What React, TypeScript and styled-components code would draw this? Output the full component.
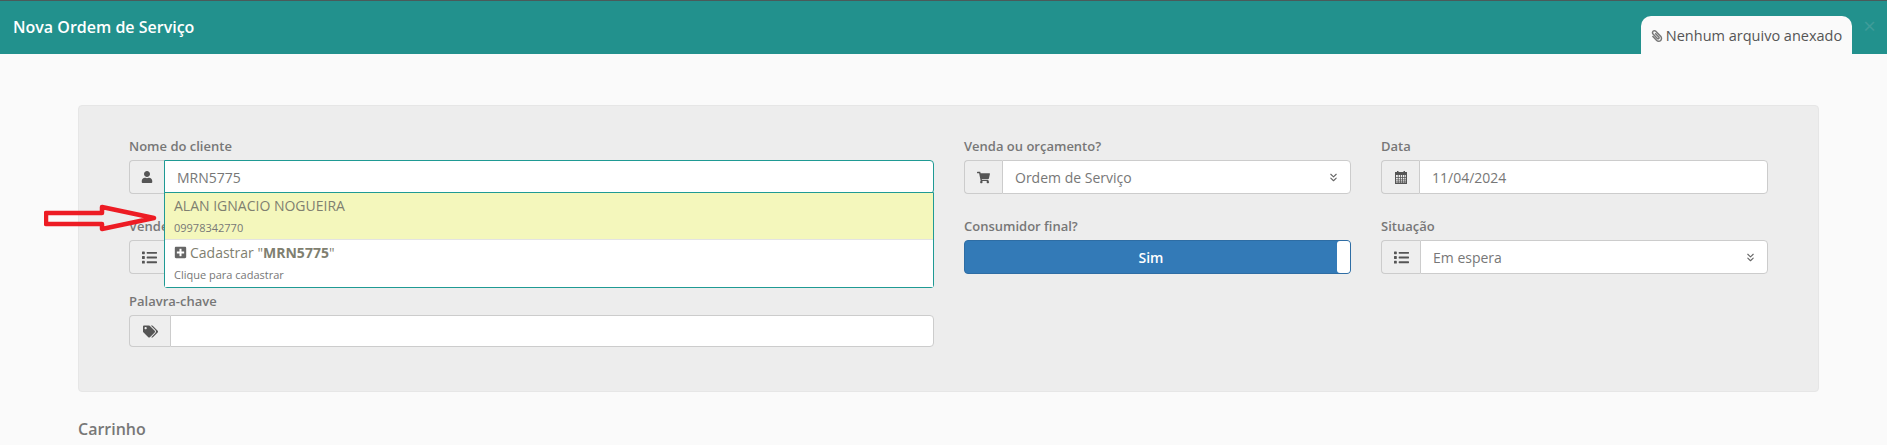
import { createGlobalStyle, styled } from 'styled-components';
import { FaList, FaPaperclip, FaPlusSquare, FaShoppingCart, FaTags, FaUser } from 'react-icons/fa';
import { ChevronsDown } from 'lucide-react';
import type { ReactNode } from 'react';

const GlobalStyle = createGlobalStyle`
  html, body {
    margin: 0;
    padding: 0;
    height: 445px;
    overflow: hidden;
    background: #fafafa;
    font-family: "Open Sans", "Noto Sans", sans-serif;
    color: #777;
  }
  * { box-sizing: border-box; }
`;

const Header = styled.header`
  height: 54px;
  border-top: 1px solid #4a5a5a;
  background: #22918d;
  display: flex;
  align-items: flex-start;
  justify-content: space-between;
  padding-left: 13px;
`;

const Title = styled.h1`
  margin: 9px 0 0;
  font-size: 16px;
  line-height: 34px;
  font-weight: 600;
  color: #fff;
`;

const HeaderRight = styled.div`
  display: flex;
  align-items: flex-start;
`;

const AttachTab = styled.div`
  width: 211px;
  height: 38px;
  margin-top: 15px;
  padding: 7px 0 5px;
  background: #fafafa;
  border-radius: 10px 10px 0 0;
  display: flex;
  justify-content: center;
  align-items: center;
  gap: 3px;
  font-size: 14.5px;
  line-height: 20px;
  color: #555;
  svg {
    font-size: 12px;
    color: #777;
    transform: scaleX(-1);
  }
`;

const CloseMark = styled.span`
  width: 35px;
  text-align: center;
  margin-top: 13px;
  font-size: 22px;
  line-height: 22px;
  color: #3f9c99;
`;

const Panel = styled.section`
  margin: 51px 68px 0 78px;
  height: 287px;
  padding: 31px 50px 0;
  background: #ededed;
  border: 1px solid #e6e6e6;
  border-radius: 4px;
  display: grid;
  grid-template-columns: 805px 387px 387px;
  column-gap: 30px;
`;

const Column = styled.div`
  display: flex;
  flex-direction: column;
`;

const Field = styled.div<{ $gap?: number }>`
  margin-bottom: ${(p) => p.$gap ?? 23}px;
`;

const Label = styled.label`
  display: block;
  font-size: 13px;
  line-height: 18px;
  margin-bottom: 5px;
  font-weight: 600;
  color: #777;
`;

const Group = styled.div<{ $height?: number }>`
  display: flex;
  height: ${(p) => p.$height ?? 34}px;
  position: relative;
`;

const Addon = styled.span<{ $width: number }>`
  flex: 0 0 ${(p) => p.$width}px;
  display: flex;
  align-items: center;
  justify-content: center;
  background: #eee;
  border: 1px solid #ccc;
  border-right: none;
  border-radius: 4px 0 0 4px;
  color: #555;
  font-size: 14px;
`;

const Input = styled.div<{ $focus?: boolean }>`
  flex: 1;
  display: flex;
  align-items: center;
  justify-content: space-between;
  padding: 0 12px;
  background: #fff;
  border: 1px solid ${(p) => (p.$focus ? '#1f9a94' : '#ccc')};
  border-radius: 0 4px 4px 0;
  font-size: 14px;
  color: #777;
`;

const SelectCaret = styled(ChevronsDown)`
  color: #666;
  margin-right: -2px;
`;

const Suggestions = styled.div`
  position: absolute;
  left: 35px;
  right: 0;
  top: 32px;
  height: 96px;
  z-index: 2;
  background: #fff;
  border: 1px solid #1f9a94;
  border-radius: 0 0 3px 3px;
`;

const Suggestion = styled.div<{ $active?: boolean }>`
  height: 47px;
  padding: 3px 9px 0;
  background: ${(p) => (p.$active ? '#f4f7bc' : '#fff')};
  border-bottom: ${(p) => (p.$active ? '1px solid #e3e3e3' : 'none')};
`;

const SuggestionTitle = styled.div`
  font-size: 14px;
  line-height: 20px;
  color: #7f7f70;
  white-space: nowrap;
  b {
    font-weight: 700;
  }
  svg {
    font-size: 13px;
    color: #666;
    vertical-align: -1px;
    margin-right: 3px;
  }
`;

const SuggestionNote = styled.div`
  margin-top: 3px;
  font-size: 11px;
  line-height: 18px;
  color: #777;
`;

const Toggle = styled.div`
  height: 34px;
  background: #337ab7;
  border: 1px solid #2e6da4;
  border-radius: 4px;
  display: flex;
  color: #fff;
  font-size: 14px;
  font-weight: 600;
`;

const ToggleLabel = styled.span`
  flex: 1;
  display: flex;
  align-items: center;
  justify-content: center;
`;

const ToggleHandle = styled.span`
  flex: 0 0 13px;
  background: #fff;
  border-radius: 3px;
`;

const Arrow = styled.svg`
  position: absolute;
  left: 44px;
  top: 204px;
  z-index: 3;
`;

const SectionTitle = styled.h2`
  margin: 26px 0 0 78px;
  font-size: 16px;
  line-height: 22px;
  font-weight: 600;
  color: #777;
`;

const Select = ({ children }: { children: ReactNode }) => (
  <Input>
    {children}
    <SelectCaret size={13} strokeWidth={2} />
  </Input>
);

const CalendarIcon = () => (
  <svg width="14" height="14" viewBox="0 0 14 14" fill="#555">
    <path d="M1 2h2V1h1.5v1h5V1H11v1h2v12H1zM2 5v8h10V5z" />
    <path d="M2 7h10v.8H2zM2 9.4h10v.8H2zM2 11.6h10v.8H2zM3.8 5h.8v8h-.8zM6 5h.8v8H6zM8.2 5H9v8h-.8zM10.4 5h.8v8h-.8z" />
  </svg>
);

export default function App() {
  return (
    <>
      <GlobalStyle />
      <Header>
        <Title>Nova Ordem de Serviço</Title>
        <HeaderRight>
          <AttachTab>
            <FaPaperclip />
            <span>Nenhum arquivo anexado</span>
          </AttachTab>
          <CloseMark>×</CloseMark>
        </HeaderRight>
      </Header>
      <Panel>
        <Column>
          <Field>
            <Label>Nome do cliente</Label>
            <Group>
              <Addon $width={35}>
                <FaUser size={12} />
              </Addon>
              <Input $focus>MRN5775</Input>
              <Suggestions>
                <Suggestion $active>
                  <SuggestionTitle>ALAN IGNACIO NOGUEIRA</SuggestionTitle>
                  <SuggestionNote>09978342770</SuggestionNote>
                </Suggestion>
                <Suggestion>
                  <SuggestionTitle>
                    <FaPlusSquare />
                    Cadastrar "<b>MRN5775</b>"
                  </SuggestionTitle>
                  <SuggestionNote>Clique para cadastrar</SuggestionNote>
                </Suggestion>
              </Suggestions>
            </Group>
          </Field>
          <Field $gap={18}>
            <Label>Vendedor</Label>
            <Group>
              <Addon $width={40}>
                <FaList size={15} />
              </Addon>
              <Input />
            </Group>
          </Field>
          <Field>
            <Label>Palavra-chave</Label>
            <Group $height={32}>
              <Addon $width={41}>
                <FaTags size={15} />
              </Addon>
              <Input />
            </Group>
          </Field>
        </Column>
        <Column>
          <Field>
            <Label>Venda ou orçamento?</Label>
            <Group>
              <Addon $width={38}>
                <FaShoppingCart size={13} />
              </Addon>
              <Select>Ordem de Serviço</Select>
            </Group>
          </Field>
          <Field>
            <Label>Consumidor final?</Label>
            <Toggle>
              <ToggleLabel>Sim</ToggleLabel>
              <ToggleHandle />
            </Toggle>
          </Field>
        </Column>
        <Column>
          <Field>
            <Label>Data</Label>
            <Group>
              <Addon $width={38}>
                <CalendarIcon />
              </Addon>
              <Input>11/04/2024</Input>
            </Group>
          </Field>
          <Field>
            <Label>Situação</Label>
            <Group>
              <Addon $width={39}>
                <FaList size={15} />
              </Addon>
              <Select>Em espera</Select>
            </Group>
          </Field>
        </Column>
      </Panel>
      <Arrow width="116" height="30" viewBox="0 0 116 30">
        <polygon
          points="2,9 58,9 58,3 110,14 58,25 58,20 2,20"
          fill="none"
          stroke="#ed1c24"
          strokeWidth="4.5"
          strokeLinejoin="round"
        />
      </Arrow>
      <SectionTitle>Carrinho</SectionTitle>
    </>
  );
}
